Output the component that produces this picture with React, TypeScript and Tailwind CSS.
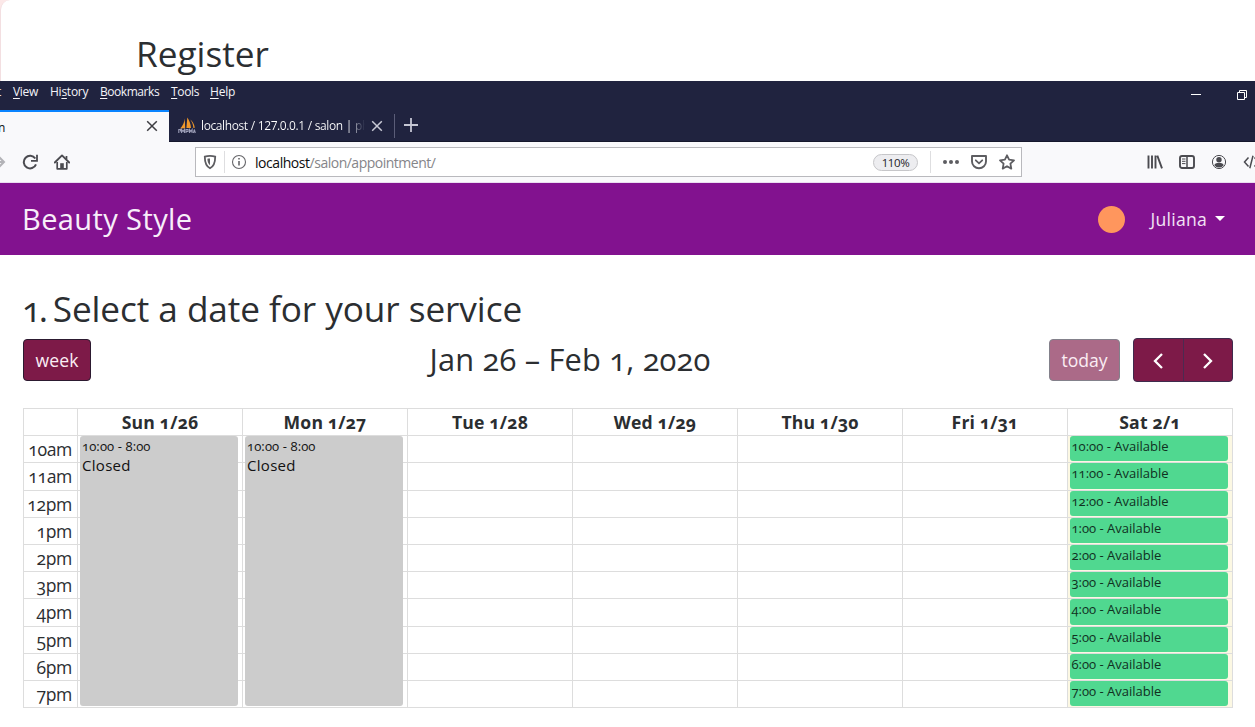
import type { ReactNode } from "react";

const days = ["Sun 1/26", "Mon 1/27", "Tue 1/28", "Wed 1/29", "Thu 1/30", "Fri 1/31", "Sat 2/1"];
const hours = ["10am", "11am", "12pm", "1pm", "2pm", "3pm", "4pm", "5pm", "6pm", "7pm"];
const slots = ["10:00", "11:00", "12:00", "1:00", "2:00", "3:00", "4:00", "5:00", "6:00", "7:00"];

function MenuItem({ before = "", hot, after, className }: { before?: string; hot: string; after: string; className: string }) {
  return (
    <span className={`shrink-0 whitespace-nowrap ${className}`}>
      {before}
      <span className="underline underline-offset-2">{hot}</span>
      {after}
    </span>
  );
}

function Cross({ className }: { className: string }) {
  return (
    <svg viewBox="0 0 12 12" className={className} fill="none" stroke="currentColor" strokeWidth="1.5">
      <path d="M1.2 1.2l9.6 9.6M10.8 1.2l-9.6 9.6" />
    </svg>
  );
}

function Icon({ className, children }: { className: string; children: ReactNode }) {
  return (
    <svg viewBox="0 0 16 16" fill="none" stroke="currentColor" strokeWidth="2" className={`size-4 shrink-0 ${className}`}>
      {children}
    </svg>
  );
}

function BrowserBar() {
  return (
    <header className="text-[#0c0c0d]">
      <div className="flex h-[61px] flex-col bg-[#20233f] text-[12px] text-[#f4f4f8]">
        <div className="flex h-[29px] items-start overflow-hidden leading-[21px]">
          <span className="-ml-[3px] w-[16px] shrink-0">t</span>
          <MenuItem hot="V" after="iew" className="w-[37px] tracking-[-0.3px]" />
          <MenuItem before="Hi" hot="s" after="tory" className="w-[50px] tracking-[-0.25px]" />
          <MenuItem hot="B" after="ookmarks" className="w-[71px] tracking-[-0.45px]" />
          <MenuItem hot="T" after="ools" className="w-[39px] tracking-[-0.35px]" />
          <MenuItem hot="H" after="elp" className="tracking-[-0.2px]" />
          <svg viewBox="0 0 10 10" className="mt-[9px] ml-auto h-[10px] w-[10px]" stroke="#fff" strokeWidth="1">
            <path d="M0 4.5h10" />
          </svg>
          <svg viewBox="0 0 10 10" className="mt-[9px] mr-[8px] ml-[36px] h-[10px] w-[10px]" fill="none" stroke="#fff" strokeWidth="1">
            <path d="M.5 2.5h7v7h-7zM2.5 2.5v-2h7v7h-2" />
          </svg>
        </div>
        <div className="flex h-[32px]">
          <div className="flex w-[169px] items-center border-t-2 border-[#0a84ff] bg-[#f9f9fb] text-[#0c0c0d]">
            <span className="-ml-[2px] pt-px leading-[29px]">n</span>
            <Cross className="mr-[11px] mb-[2px] ml-auto size-[12px] text-[#3d3d42]" />
          </div>
          <div className="flex flex-1 items-center border-b border-[#15172c] pl-[9px]">
            <svg viewBox="0 0 18 17" className="h-[17px] w-[18px]">
              <path d="M6.8 1.5C6.5 5 4.5 9 2.2 11.5L7.2 11.2zM9.3.5l-.9 10.6 4.6-.2C12.7 7 11.3 3.3 9.3.5zM12.2 2.5c1.7 2 3 5 3.2 8.5l1.4-.2C16.3 7.3 14.6 4.2 12.2 2.5z" fill="#f0982b" />
              <path d="M.8 16v-3.5h1.700v2M3.500 16v-3.500l1.500 2 1.500-2V16M8 16v-3.500h2v2H8M11.500 16v-3.500l1.300 2 1.300-2V16M15.500 16l.8-3.500 1 3.500" fill="none" stroke="#9b9db6" strokeWidth="1.1" />
            </svg>
            <span className="ml-[5px] w-[164px] overflow-hidden bg-gradient-to-r from-white from-90% to-[#20233f] bg-clip-text pt-px tracking-[-0.4px] [word-spacing:0.3px] whitespace-nowrap text-transparent">
              localhost / 127.0.0.1 / salon | ph
            </span>
            <Cross className="ml-[6px] size-[12px] text-[#c9cad6]" />
            <span className="ml-[11px] h-6 w-px bg-[#5b5d78]" />
            <svg viewBox="0 0 14 14" className="mb-px ml-[9px] size-[14px]" stroke="#c5c6d3" strokeWidth="1.8">
              <path d="M7 0v14M0 7h14" />
            </svg>
          </div>
        </div>
      </div>

      <div className="flex h-[41px] items-center border-b border-[#eadcf0] bg-[#f9f9fb] text-[#4b4b50]">
        <Icon className="-ml-[10px] text-[#b3b3b7]">
          <path d="M1 8h13M8.5 2.5L14 8l-5.5 5.5" />
        </Icon>
        <Icon className="ml-[16px]">
          <path d="M14 10.300A6.300 6.300 0 1 1 13.300 4.500" />
          <path d="M15 .8v6H9" strokeWidth="1.8" />
        </Icon>
        <Icon className="ml-[16px]">
          <path d="M.8 8.500L8 1.400l7.200 7.100" strokeWidth="1.9" strokeLinecap="round" strokeLinejoin="round" />
          <path d="M3.200 8v6.800h9.600V8M12.500 2v3" strokeWidth="1.7" strokeLinejoin="round" />
          <path d="M6.200 14.500V9.200h3.600v5.300z" fill="currentColor" stroke="none" />
        </Icon>
        <div className="ml-[125px] flex h-[30px] w-[827px] shrink-0 items-center border border-[#b9b9bd] bg-white">
          <Icon className="ml-[6px] text-[#5d5d61]">
            <path d="M8 1.900c1.700 0 3.700.3 5.200.8 0 5.300-.8 9.300-5.200 11.500-4.400-2.200-5.200-6.200-5.200-11.500 1.500-.5 3.500-.8 5.200-.8z" strokeWidth="1.8" />
            <path d="M8 4.500c-1 0-1.800.1-2.600.3.100 2.800.7 5 2.600 6.500z" fill="currentColor" stroke="none" />
          </Icon>
          <span className="ml-[6px] h-[22px] w-px bg-[#dedee0]" />
          <Icon className="ml-[6px] text-[#66666a]">
            <circle cx="8" cy="8" r="6.5" strokeWidth="1.1" />
            <path d="M8 7v4.500M8 4v1.600" strokeWidth="1.6" />
          </Icon>
          <span className="ml-[8px] pt-[2px] text-[14px] leading-[26px] whitespace-nowrap text-[#858589]">
            <span className="tracking-[-0.45px] text-[#0c0c0d]">localhost</span>
            <span className="tracking-[-0.5px]">/salon/appointment/</span>
          </span>
          <span className="ml-auto flex h-[17px] w-[45px] items-center justify-center rounded-full border border-[#c6c6c9] bg-[#ededf0] pt-px text-[11.5px] tracking-[-0.4px] text-[#1c1c1e]">
            110%
          </span>
          <span className="ml-[12px] h-[22px] w-px bg-[#dedee0]" />
          <svg viewBox="0 0 16 16" className="ml-[12px] size-4" fill="#5d5d61">
            <circle cx="2" cy="8" r="2" />
            <circle cx="8" cy="8" r="2" />
            <circle cx="14" cy="8" r="2" />
          </svg>
          <Icon className="ml-[12px] text-[#5d5d61]">
            <path d="M1 2h14v5.500a7 6.700 0 0 1-14 0z" strokeLinejoin="round" strokeWidth="1.9" />
            <path d="M4.800 6.300L8 9.300l3.200-3" strokeLinecap="round" strokeWidth="1.8" />
          </Icon>
          <Icon className="mr-[6px] ml-[12px] text-[#5d5d61]">
            <path d="M8 1.300l2.100 4.400 4.900.6-3.600 3.400.9 4.900L8 12.200l-4.300 2.400.9-4.900L1 6.300l4.900-.6z" strokeLinejoin="round" strokeWidth="1.8" />
          </Icon>
        </div>
        <Icon className="ml-[125px]">
          <path d="M1.500 1.500v13M5 1.500v13M8.500 1.500v13M10.300 1.700L15 14.300" strokeWidth="1.9" />
        </Icon>
        <Icon className="ml-[16px]">
          <rect x="1" y="2" width="14" height="12" rx="2" strokeWidth="1.9" />
          <path d="M8 2v12" strokeWidth="1.5" />
          <path d="M3 5h3.500M3 7.300h3.500M3 9.600h3.500" strokeWidth="1" />
        </Icon>
        <Icon className="ml-[16px]">
          <circle cx="8" cy="8" r="6.6" strokeWidth="1" />
          <circle cx="8" cy="5.8" r="2.7" fill="currentColor" stroke="none" />
          <path d="M3.300 11.300c.3-1.700 1.800-2.300 4.700-2.300s4.400.6 4.700 2.300A5.800 5.800 0 0 1 8 13.500a5.800 5.800 0 0 1-4.700-2.200z" fill="currentColor" stroke="none" />
        </Icon>
        <Icon className="-mr-4 ml-[16px]">
          <path d="M5.500 3.500L1.500 8l4 4.500M10 1.800L6.800 14.200M11.500 3.500l4 4.500-4 4.500" strokeWidth="1.5" />
        </Icon>
      </div>
    </header>
  );
}

function Slot({ time }: { time: string }) {
  return (
    <div className="mr-[4px] mb-px ml-[2px] flex-1 overflow-hidden rounded-[3px] bg-[#50d890] pl-[1.5px] text-[13px] leading-[20px] whitespace-nowrap text-[#10301f]">
      {time} - Available
    </div>
  );
}

function Closed() {
  return (
    <div className="absolute top-0 left-[2px] z-10 h-[270px] w-[158px] rounded-[3px] bg-[#ccc] pl-[2px] text-[#111]">
      <div className="text-[13px] leading-[20px] tracking-[0.1px]">10:00 - 8:00</div>
      <div className="text-[15px] leading-[18px] tracking-[0.3px]">Closed</div>
    </div>
  );
}

function Calendar() {
  return (
    <div className="mt-[26px] grid w-[1210px] grid-cols-[54px_repeat(7,165px)] border-r border-b border-[#ddd]">
      <div className="h-[27px] border-t border-l border-[#ddd]" />
      {days.map((day) => (
        <div key={day} className="h-[27px] border-t border-l border-[#ddd] pt-px text-center text-[17.6px] leading-[25px] font-bold tracking-[0.2px]">
          {day}
        </div>
      ))}
      {hours.map((hour, row) => (
        <div key={hour} className={`col-span-8 grid grid-cols-subgrid ${row === 1 || row === 6 ? "h-[28px]" : "h-[27px]"}`}>
          <div className="border-t border-l border-[#ddd] pt-px pr-[5px] text-right text-[17.6px] leading-[25px] tracking-[-0.4px]">{hour}</div>
          {days.map((day, col) => (
            <div key={day} className={`relative flex border-t border-l border-[#ddd] ${col === 6 ? "bg-[#fcf8e3]" : ""}`}>
              {row === 0 && col < 2 && <Closed />}
              {col === 6 && <Slot time={slots[row]} />}
            </div>
          ))}
        </div>
      ))}
    </div>
  );
}

export default function App() {
  return (
    <div className="h-[727px] w-[1255px] overflow-hidden bg-white font-['Open_Sans',sans-serif] text-[#2b2e31]">
      <div className="h-[81px] bg-[#fce8e8]">
        <div className="h-full rounded-tl-[10px] border-l border-[#f3dfe1] bg-white pt-[33px] pl-[135px] text-[35.2px] leading-[40px]">Register</div>
      </div>
      <BrowserBar />
      <nav className="flex h-[72px] items-center bg-[#82128f] pl-[23px] text-white">
        <span className="-ml-px pb-px text-[29px] leading-[40px] tracking-[0.4px] text-[#f8eef9]">Beauty Style</span>
        <span className="mt-px ml-auto size-[27px] rounded-full bg-[#ff965d]" />
        <span className="ml-[26px] text-[17.6px] tracking-[0.25px] text-[#f3e3f5]">Juliana</span>
        <svg viewBox="0 0 10 5" className="mr-[30px] mb-[2px] ml-[8px] h-[5px] w-[10px]" fill="#fff">
          <path d="M0 0h10L5 5z" />
        </svg>
      </nav>

      <main className="pt-[33px] pl-[23px] [font-feature-settings:'onum']">
        <h1 className="-ml-px text-[35.2px] leading-[40px] tracking-[-0.08px] whitespace-nowrap">
          <span className="tracking-[-2.3px]">1. </span>Select a date for your service
        </h1>
        <div className="mt-[10px] flex h-[44px] w-[1210px] items-center justify-between">
          <button className="h-[42px] w-[68px] rounded-[4px] border border-[#2c1a30] bg-[#7d1a48] text-[17.6px] tracking-[0.1px] text-[#fbeef4]">week</button>
          <h2 className="pb-[2px] text-[30.8px] leading-[40px] tracking-[0.2px] whitespace-nowrap">Jan 26 – Feb 1, 2020</h2>
          <div className="flex items-center">
            <button className="h-[42px] w-[71px] rounded-[4px] border border-[#83818b] bg-[#ab6a88] text-[17.6px] text-[#fbeef4]">today</button>
            <div className="ml-[13px] flex h-[44px] w-[100px] rounded-[4px] border border-[#3f2a4d] bg-[#7d1a48]">
              <button className="flex flex-1 items-center justify-center border-r border-[#4c2a50]">
                <svg viewBox="0 0 10 16" className="mt-[2px] h-[16px] w-[10px]" fill="none" stroke="#fff" strokeWidth="2.3">
                  <path d="M9 1L2 8l7 7" />
                </svg>
              </button>
              <button className="flex flex-1 items-center justify-center">
                <svg viewBox="0 0 10 16" className="mt-[2px] h-[16px] w-[10px]" fill="none" stroke="#fff" strokeWidth="2.3">
                  <path d="M1 1l7 7-7 7" />
                </svg>
              </button>
            </div>
          </div>
        </div>
        <Calendar />
      </main>
    </div>
  );
}
